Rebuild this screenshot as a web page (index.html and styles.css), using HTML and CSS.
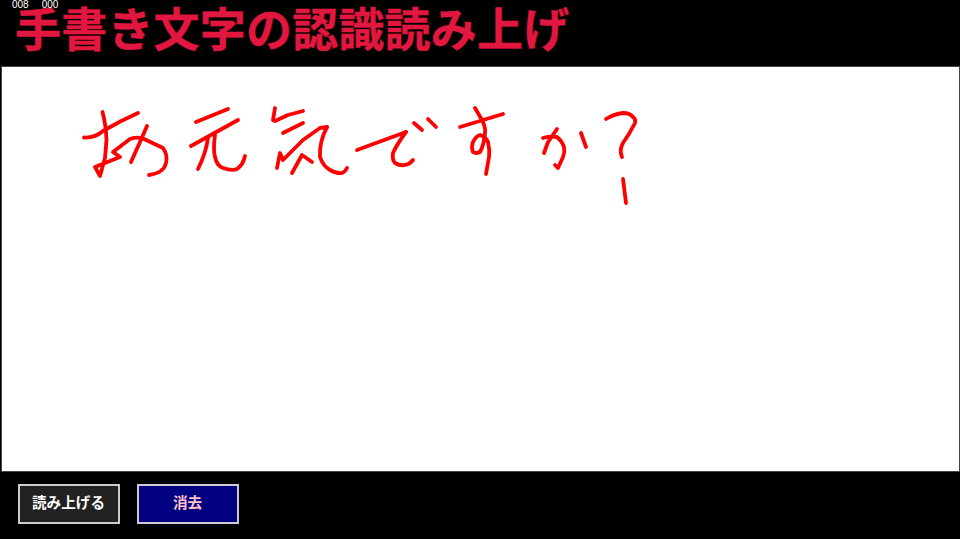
FILE: index.html
```html
<!DOCTYPE html>
<html lang="ja">
<head>
<meta charset="utf-8">
<title>手書き文字の認識読み上げ</title>
<link rel="stylesheet" href="styles.css">
</head>
<body>
<header class="header">
  <div class="counters"><span class="counter">008</span><span class="counter">000</span></div>
  <h1 class="title">手書き文字の認識読み上げ</h1>
</header>
<main class="canvas">
  <svg class="ink" viewBox="2 67 957 404" aria-hidden="true">
    <g class="strokes">
      <!-- お -->
      <path d="M84 137.5 Q95 138 103 131 Q120 121 138 113"/>
      <path d="M102.5 112 Q106 125 106.5 140 L105 158 L100 176 L95 167 L120 157 L113 152 L130 139 Q136 137 142 138 L163 148 Q168 155 166 163 Q164 173 149 175"/>
      <path d="M147 126 Q141 140 131 162"/>
      <!-- 元 -->
      <path d="M196 122 L228 109"/>
      <path d="M191 146 L238 120"/>
      <path d="M208 138 Q206 153 198 169"/>
      <path d="M215 135 Q213 150 215 157 Q217 166 223 168 Q232 171 237 169 Q243 165 245 156"/>
      <!-- 気 -->
      <path d="M275 108 L273 120 L275 121 L288 115 L303 111"/>
      <path d="M283 133 L303 123"/>
      <path d="M277 168 L280 153 L283 160 L293 150 L303 140 L320 128 L327 127"/>
      <path d="M327 127 Q319 142 320 157 Q323 166 330 170 Q337 174 342 173 Q345 172 347 168"/>
      <path d="M292 173 L302 155 L312 162"/>
      <!-- で -->
      <path d="M357 150 L406 132"/>
      <path d="M406 132 Q397 144 393 153 Q392 160 395 163 Q400 166 405 165 Q410 164 413 160"/>
      <path d="M414 123 L422 130"/>
      <path d="M428 119 L436 127"/>
      <!-- す -->
      <path d="M460 127 L503 114"/>
      <path d="M475 108 L482 120 Q486 128 485 133 Q484 145 480 152 Q476 154 473 152 Q471 147 473 142 Q476 136 480 135 Q486 137 488 142 Q490 150 489 157 L486 174"/>
      <!-- か -->
      <path d="M543 138 Q550 136 557 137 Q562 141 564 147 Q565 152 563 157 L558 168 L555 165"/>
      <path d="M557 129 L548 142 L544 153"/>
      <path d="M581 133 L586 147"/>
      <!-- ? -->
      <path d="M606 119 Q614 114 623 113 Q630 113 633 117 Q636 119 635 123 Q630 133 623 143 Q619 150 622 157"/>
      <path d="M623 179 L626 203"/>
    </g>
  </svg>
</main>
<footer class="footer">
  <button class="btn btn-read">読み上げる</button>
  <button class="btn btn-clear">消去</button>
</footer>
</body>
</html>
```

FILE: styles.css
```css
* { box-sizing: border-box; }
html, body { margin: 0; padding: 0; }
body {
  width: 960px;
  height: 539px;
  overflow: hidden;
  background: #000;
  font-family: "Noto Sans CJK JP", "Liberation Sans", sans-serif;
  display: flex;
  flex-direction: column;
}
.header {
  height: 66px;
  padding-left: 12px;
}
.counters {
  display: flex;
  gap: 13px;
  height: 9px;
  font: 10px/10px "Liberation Sans", sans-serif;
  color: #fff;
  position: relative;
  z-index: 1;
}
.title {
  margin: -12px 0 0 3px;
  font-size: 46px;
  line-height: 58px;
  font-weight: 700;
  letter-spacing: 0.2px;
  -webkit-text-stroke: 0.4px #e2173f;
  color: #e2173f;
  white-space: nowrap;
}
.canvas {
  height: 406px;
  margin-left: 1px;
  background: #fff;
  border: 1px solid #444;
}
.ink { display: block; width: 100%; height: 100%; }
.strokes {
  fill: none;
  stroke: #ff0000;
  stroke-width: 3.8;
  stroke-linecap: round;
  stroke-linejoin: round;
}
.footer {
  display: flex;
  gap: 17px;
  padding: 12px 0 0 17.5px;
}
.btn {
  width: 102px;
  height: 40px;
  border: 2px solid #ccc;
  font-family: inherit;
  font-size: 14.6px;
  line-height: 1;
  font-weight: 700;
  padding: 0 0 3px;
}
.btn-read { background: #222; color: #fff; }
.btn-clear { background: #000080; color: #ffc0cb; }
```
